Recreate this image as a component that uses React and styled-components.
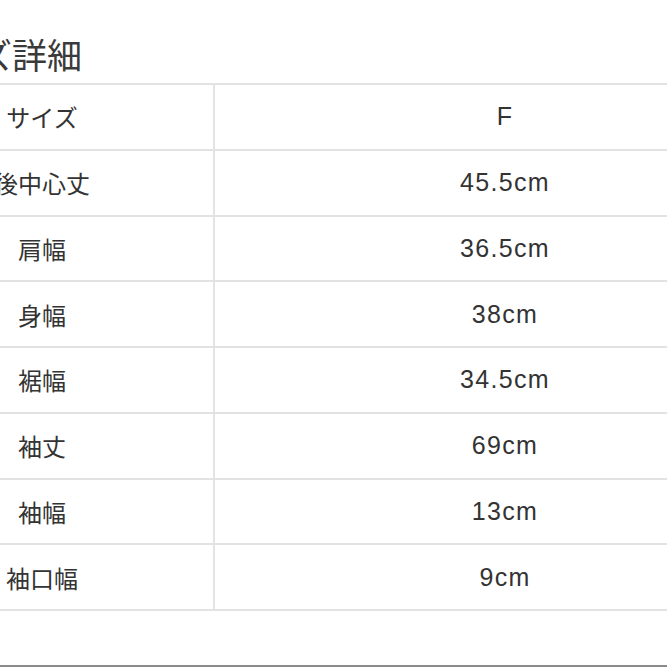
import React from 'react'
import styled, { createGlobalStyle } from 'styled-components'

const GlobalStyle = createGlobalStyle`
  html, body {
    margin: 0;
    padding: 0;
    background: #fff;
  }
  body {
    width: 667px;
    height: 667px;
    overflow: hidden;
  }
`

const Page = styled.div`
  width: 667px;
  height: 665px;
  overflow: hidden;
  border-bottom: 2px solid #8a8a8a;
  background: #fff;
`

const Title = styled.h2`
  margin: 0 0 0 -92px;
  padding-top: 36px;
  font-family: "Noto Sans CJK JP", sans-serif;
  font-weight: 400;
  font-size: 35px;
  line-height: 1;
  color: #3a3a3a;
  white-space: nowrap;
  height: 47px;
`

const Table = styled.div`
  margin-left: -129px;
  width: 924px;
  border-top: 2px solid #e2e2e2;
`

const Row = styled.div`
  display: grid;
  grid-template-columns: 344px 580px;
  height: 65.75px;
  box-sizing: border-box;
  border-bottom: 2px solid #e2e2e2;
`

const Cell = styled.div`
  display: flex;
  align-items: center;
  justify-content: center;
  color: #333;
  white-space: nowrap;
  ${p => p.$label ? `
    border-right: 2px solid #e4e4e4;
    font-family: "Noto Sans CJK JP", sans-serif;
    font-size: 24px;
  ` : `
    font-family: "Liberation Sans", Arial, sans-serif;
    font-size: 25px;
    letter-spacing: 1.3px;
  `}
`

const rows = [
  ['サイズ', 'F'],
  ['後中心丈', '45.5cm'],
  ['肩幅', '36.5cm'],
  ['身幅', '38cm'],
  ['裾幅', '34.5cm'],
  ['袖丈', '69cm'],
  ['袖幅', '13cm'],
  ['袖口幅', '9cm'],
]

export default function App() {
  return (
    <>
      <GlobalStyle />
      <Page>
        <Title>サイズ詳細</Title>
        <Table>
          {rows.map(([label, value]) => (
            <Row key={label}>
              <Cell $label>{label}</Cell>
              <Cell>{value}</Cell>
            </Row>
          ))}
        </Table>
      </Page>
    </>
  )
}
